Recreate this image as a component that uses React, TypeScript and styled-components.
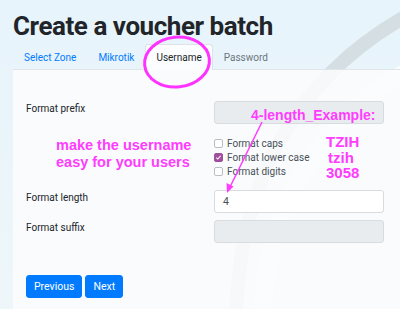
import React from "react";
import styled, { createGlobalStyle } from "styled-components";

const Global = createGlobalStyle`
  html, body { margin: 0; padding: 0; }
  body {
    width: 400px; height: 309px; overflow: hidden;
    font-family: Roboto, "Liberation Sans", Arial, sans-serif;
    background: linear-gradient(180deg, #e7f4fb 0%, #eef6fa 100%);
  }
  * { box-sizing: border-box; }
`;

const Page = styled.div`
  position: relative;
  width: 400px;
  height: 309px;
  overflow: hidden;
  padding: 9px 0 0 13px;
  display: flex;
  flex-direction: column;
`;

const Backdrop = styled.svg`
  position: absolute;
  left: 0; top: 0;
  width: 400px; height: 309px;
  pointer-events: none;
`;

const Title = styled.h1`
  position: relative;
  margin: 0;
  font-size: 26px;
  font-weight: 700;
  color: #212529;
  line-height: 35px;
  letter-spacing: -0.45px;
`;

const Tabs = styled.div`
  position: relative;
  display: flex;
  height: 26px;
  border-bottom: 1px solid #dfe5e8;
`;

const Tab = styled.div<{ $active?: boolean; $muted?: boolean }>`
  padding: 0 10px;
  height: 26px;
  display: flex;
  align-items: center;
  font-size: 10px;
  color: ${(p) => (p.$active ? "#212529" : p.$muted ? "#6c757d" : "#007bff")};
  background: ${(p) => (p.$active ? "#fbfdfe" : "transparent")};
  border: 1px solid ${(p) => (p.$active ? "#dee2e6" : "transparent")};
  border-bottom: none;
  border-radius: 3px 3px 0 0;
  margin-bottom: -1px;
`;

const Card = styled.div`
  position: relative;
  flex: 1;
  background: rgba(250, 252, 253, 0.88);
  padding: 31px 16px 0 13px;
  display: flex;
  flex-direction: column;
`;

const Row = styled.div<{ $gap: number }>`
  display: grid;
  grid-template-columns: 188px 170px;
  margin-bottom: ${(p) => p.$gap}px;
`;

const Label = styled.div`
  font-size: 10px;
  color: #212529;
  padding-top: 1px;
  line-height: 14px;
`;

const Field = styled.div<{ $disabled?: boolean }>`
  height: 23px;
  border: 1px solid #d7dce0;
  border-radius: 3px;
  background: ${(p) => (p.$disabled ? "#e9ecef" : "#ffffff")};
  font-size: 10.5px;
  color: #495057;
  display: flex;
  align-items: center;
  padding-left: 8px;
`;

const Checks = styled.div`
  display: flex;
  flex-direction: column;
  margin-top: 12px;
`;

const CheckRow = styled.div`
  display: flex;
  align-items: center;
  height: 14px;
  font-size: 10px;
  color: #495057;
  gap: 4px;
`;

const Box = styled.span<{ $on?: boolean }>`
  width: 9px;
  height: 9px;
  border-radius: 2px;
  border: 1px solid ${(p) => (p.$on ? "#a04f9c" : "#b8bec4")};
  background: ${(p) => (p.$on ? "#a04f9c" : "#fff")};
  display: inline-flex;
  align-items: center;
  justify-content: center;
`;

const Buttons = styled.div`
  display: flex;
  gap: 3px;
  margin-top: 32px;
`;

const Button = styled.button`
  height: 23px;
  padding: 0 7px;
  margin: 0;
  border: 1px solid #007bff;
  border-radius: 3px;
  background: #007bff;
  color: #fff;
  font-family: Roboto, "Liberation Sans", Arial, sans-serif;
  font-size: 10.5px;
`;

const Note = styled.div<{ $size: number }>`
  position: absolute;
  font-family: "Liberation Sans", Arial, sans-serif;
  font-weight: 700;
  font-size: ${(p) => p.$size}px;
  color: #ff3cff;
  line-height: 1;
  white-space: nowrap;
`;

const Overlay = styled.svg`
  position: absolute;
  left: 0; top: 0;
  width: 400px; height: 309px;
  pointer-events: none;
`;

export default function App() {
  return (
    <>
      <Global />
      <Page>
        <Backdrop viewBox="0 0 400 309">
          <path d="M236 320 C238 190 290 80 410 14" fill="none" stroke="#d5dfe3" strokeWidth="14" />
          <path d="M262 320 C266 210 318 120 410 70" fill="none" stroke="#ffffff" strokeWidth="18" opacity="0.7" />
        </Backdrop>
        <Title>Create a voucher batch</Title>
        <Tabs>
          <Tab>Select Zone</Tab>
          <Tab>Mikrotik</Tab>
          <Tab $active>Username</Tab>
          <Tab $muted>Password</Tab>
        </Tabs>
        <Card>
          <Row $gap={12}>
            <Label>Format prefix</Label>
            <div>
              <Field $disabled />
              <Checks>
                <CheckRow><Box />Format caps</CheckRow>
                <CheckRow>
                  <Box $on>
                    <svg width="7" height="7" viewBox="0 0 8 8">
                      <path d="M1.5 4.2 L3.2 5.8 L6.5 2" fill="none" stroke="#fff" strokeWidth="1.2" />
                    </svg>
                  </Box>
                  Format lower case
                </CheckRow>
                <CheckRow><Box />Format digits</CheckRow>
              </Checks>
            </div>
          </Row>
          <Row $gap={7}>
            <Label>Format length</Label>
            <Field>4</Field>
          </Row>
          <Row $gap={0}>
            <Label>Format suffix</Label>
            <Field $disabled />
          </Row>
          <Buttons>
            <Button>Previous</Button>
            <Button>Next</Button>
          </Buttons>
        </Card>
        <Note $size={14.5} style={{ left: 56, top: 137, lineHeight: "17px" }}>
          make the username<br />easy for your users
        </Note>
        <Note $size={14} style={{ left: 251, top: 108 }}>4-length_Example:</Note>
        <Note $size={15} style={{ left: 326, top: 134 }}>TZIH</Note>
        <Note $size={15} style={{ left: 328, top: 149.5 }}>tzih</Note>
        <Note $size={15} style={{ left: 326, top: 165 }}>3058</Note>
        <Overlay viewBox="0 0 400 309">
          <ellipse cx="177" cy="62" rx="32.5" ry="25" fill="none" stroke="#ff33ff" strokeWidth="3" transform="rotate(-6 177 62)" />
          <line x1="262" y1="122" x2="230" y2="187" stroke="#ff3cff" strokeWidth="1.5" />
          <path d="M227 193 L226.5 183 L233.5 186.5 Z" fill="#ff3cff" />
        </Overlay>
      </Page>
    </>
  );
}
